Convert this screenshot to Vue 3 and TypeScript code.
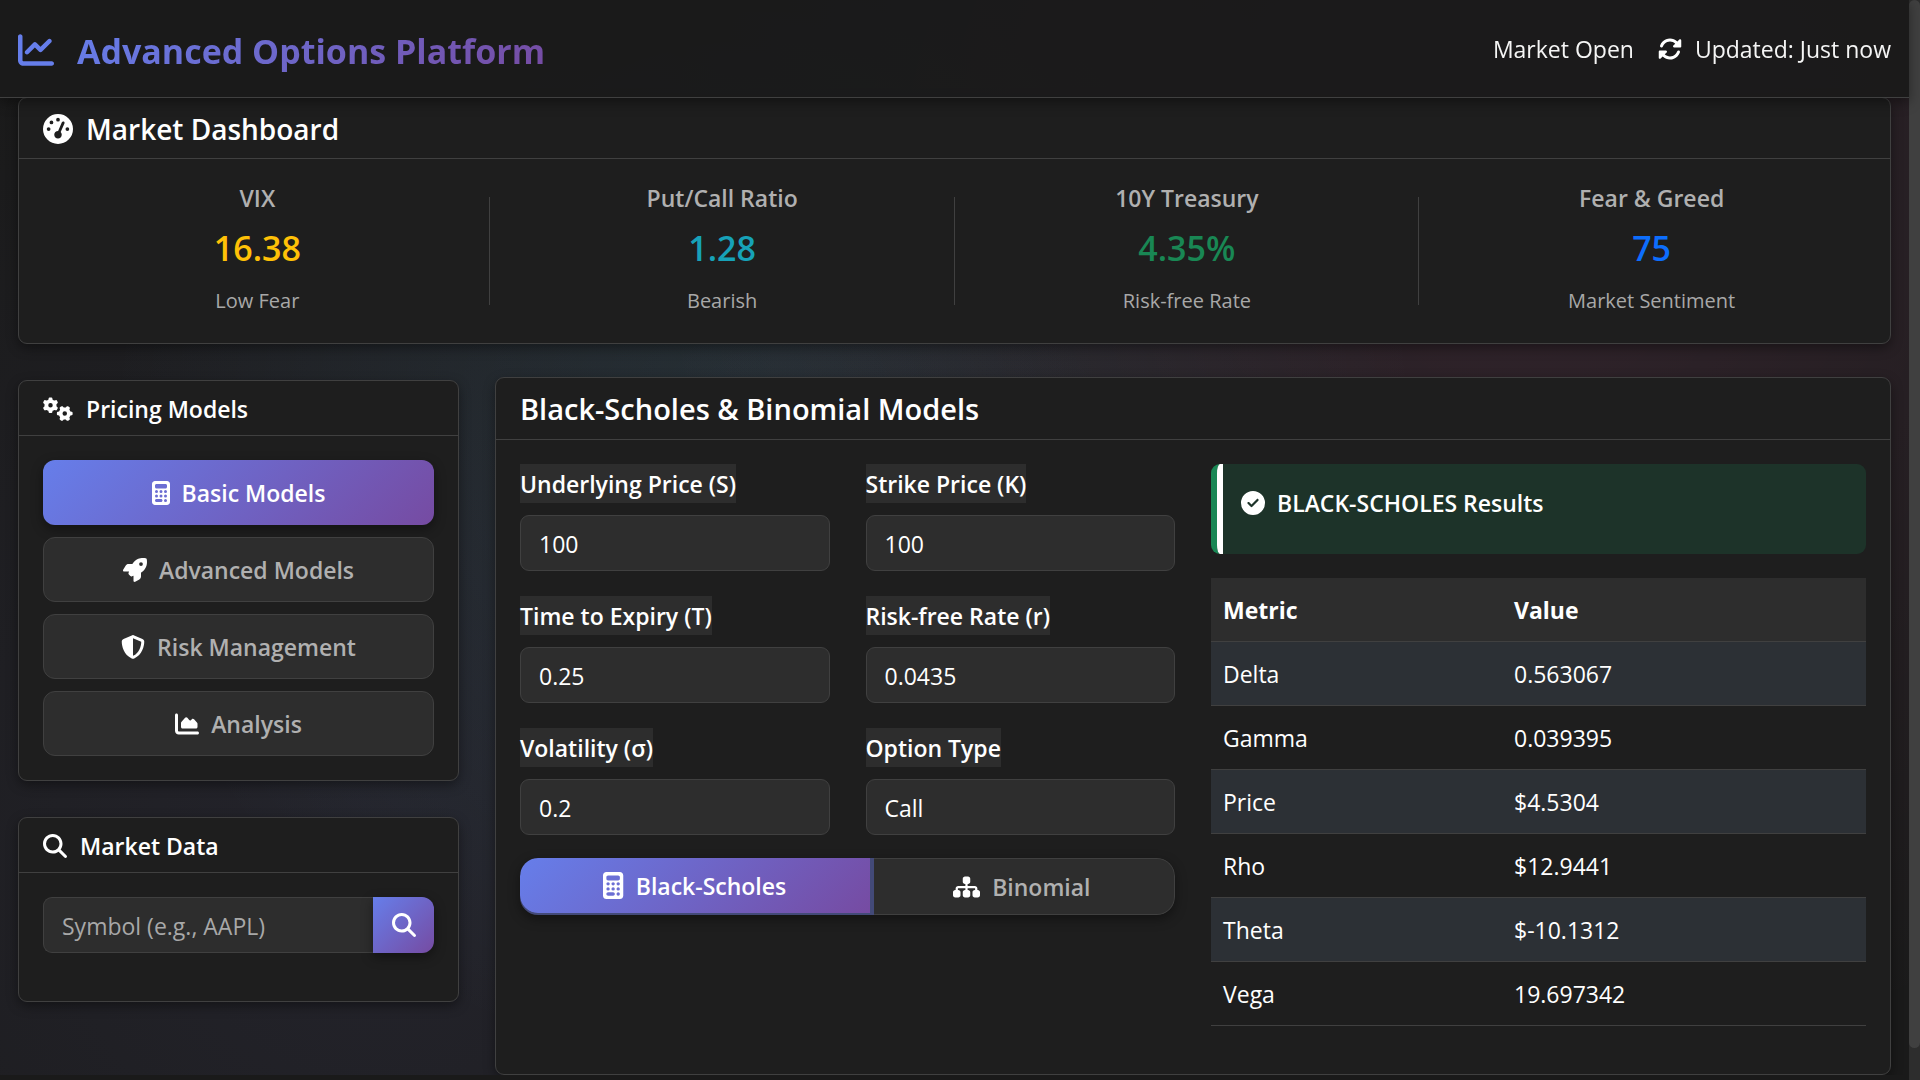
<script setup lang="ts">
import { ref } from 'vue'

interface Icon {
  box: string
  path: string
}

const icons: Record<string, Icon> = {
  chartLine: {
    box: '0 0 512 512',
    path: 'M64 64c0-17.7-14.3-32-32-32S0 46.3 0 64V400c0 44.2 35.8 80 80 80H480c17.7 0 32-14.3 32-32s-14.3-32-32-32H80c-8.8 0-16-7.2-16-16V64zm406.6 86.6c12.5-12.5 12.5-32.8 0-45.3s-32.8-12.5-45.3 0L320 210.7l-57.4-57.4c-12.5-12.5-32.8-12.5-45.3 0l-112 112c-12.5 12.5-12.5 32.8 0 45.3s32.8 12.5 45.3 0L240 221.3l57.4 57.4c12.5 12.5 32.8 12.5 45.3 0l128-128z',
  },
  gauge: {
    box: '0 0 512 512',
    path: 'M0 256a256 256 0 1 1 512 0A256 256 0 1 1 0 256zM288 96a32 32 0 1 0 -64 0 32 32 0 1 0 64 0zM256 416c35.3 0 64-28.7 64-64c0-17.4-6.9-33.1-18.1-44.6L366 161.7c5.3-12.1-.2-26.3-12.3-31.6s-26.3 .2-31.6 12.3L257.9 288c-.6 0-1.3 0-1.9 0c-35.3 0-64 28.7-64 64s28.7 64 64 64zM176 144a32 32 0 1 0 -64 0 32 32 0 1 0 64 0zM96 288a32 32 0 1 0 0-64 32 32 0 1 0 0 64zm352-32a32 32 0 1 0 -64 0 32 32 0 1 0 64 0z',
  },
  rotate: {
    box: '0 0 512 512',
    path: 'M142.9 142.9c62.2-62.2 162.7-62.5 225.3-1L327 183c-6.9 6.9-8.9 17.2-5.2 26.2s12.5 14.8 22.2 14.8H463.5c0 0 0 0 0 0H472c13.3 0 24-10.7 24-24V72c0-9.7-5.8-18.5-14.8-22.2s-19.3-1.7-26.2 5.2L413.4 96.6c-87.6-86.5-228.7-86.2-315.8 1C73.2 122 55.6 150.7 44.8 181.4c-5.9 16.7 2.9 34.9 19.5 40.8s34.9-2.9 40.8-19.5c7.7-21.8 20.2-42.3 37.8-59.8zM16 312v7.6 .7V440c0 9.7 5.8 18.5 14.8 22.2s19.3 1.7 26.2-5.2l41.6-41.6c87.6 86.5 228.7 86.2 315.8-1c24.4-24.4 42.1-53.1 52.9-83.7c5.9-16.7-2.9-34.9-19.5-40.8s-34.9 2.9-40.8 19.5c-7.7 21.8-20.2 42.3-37.8 59.8c-62.2 62.2-162.7 62.5-225.3 1L185 329c6.9-6.9 8.9-17.2 5.2-26.2s-12.5-14.8-22.2-14.8H48.4h-.7H40c-13.3 0-24 10.7-24 24z',
  },
  calculator: {
    box: '0 0 384 512',
    path: 'M64 0C28.7 0 0 28.7 0 64V448c0 35.3 28.7 64 64 64H320c35.3 0 64-28.7 64-64V64c0-35.3-28.7-64-64-64H64zM96 64H288c17.7 0 32 14.3 32 32v32c0 17.7-14.3 32-32 32H96c-17.7 0-32-14.3-32-32V96c0-17.7 14.3-32 32-32zm32 160a32 32 0 1 1 -64 0 32 32 0 1 1 64 0zM96 352a32 32 0 1 1 0-64 32 32 0 1 1 0 64zM64 416c0-17.7 14.3-32 32-32h96c17.7 0 32 14.3 32 32s-14.3 32-32 32H96c-17.7 0-32-14.3-32-32zM192 256a32 32 0 1 1 0-64 32 32 0 1 1 0 64zm32 64a32 32 0 1 1 -64 0 32 32 0 1 1 64 0zm64-64a32 32 0 1 1 0-64 32 32 0 1 1 0 64zm32 64a32 32 0 1 1 -64 0 32 32 0 1 1 64 0zM288 448a32 32 0 1 1 0-64 32 32 0 1 1 0 64z',
  },
  rocket: {
    box: '0 0 512 512',
    path: 'M156.6 384.9L125.7 354c-8.5-8.5-11.5-20.8-7.7-32.2c3-8.9 7-20.5 11.8-33.8L24 288c-8.6 0-16.6-4.6-20.9-12.1s-4.2-16.7 .2-24.1l52.5-88.5c13-21.9 36.5-35.3 61.9-35.3l82.3 0c2.4-4 4.8-7.7 7.2-11.3C289.1-4.1 411.1-8.1 483.9 5.3c11.6 2.1 20.6 11.2 22.8 22.8c13.4 72.9 9.3 194.8-111.4 276.7c-3.5 2.4-7.3 4.8-11.3 7.2v82.3c0 25.4-13.4 49-35.3 61.9l-88.5 52.5c-7.4 4.4-16.6 4.5-24.1 .2s-12.1-12.2-12.1-20.9V380.8c-14.1 4.9-26.4 8.9-35.7 11.9c-11.2 3.6-23.4 .5-31.8-7.8zM384 168a40 40 0 1 0 0-80 40 40 0 1 0 0 80z',
  },
  shield: {
    box: '0 0 512 512',
    path: 'M256 0c4.6 0 9.2 1 13.4 2.9L457.7 82.8c22 9.3 38.4 31 38.3 57.2c-.5 99.2-41.3 280.7-213.6 363.2c-16.7 8-36.1 8-52.8 0C57.3 420.7 16.5 239.2 16 140c-.1-26.2 16.3-47.9 38.3-57.2L242.7 2.9C246.8 1 251.4 0 256 0zm0 66.8V444.8C394 378 431.1 230.1 432 141.4L256 66.8l0 0z',
  },
  chartArea: {
    box: '0 0 512 512',
    path: 'M64 64c0-17.7-14.3-32-32-32S0 46.3 0 64V400c0 44.2 35.8 80 80 80H480c17.7 0 32-14.3 32-32s-14.3-32-32-32H80c-8.8 0-16-7.2-16-16V64zm96 288H448c17.7 0 32-14.3 32-32V251.8c0-7.6-2.7-15-7.7-20.8l-65.8-76.8c-12.1-14.2-33.7-15-46.9-1.8l-21 21c-10 10-26.4 9.2-35.4-1.6l-39.2-47c-12.6-15.1-35.7-15.4-48.7-.6L135.9 215c-5.1 5.8-7.9 13.3-7.9 21.1v84c0 17.7 14.3 32 32 32z',
  },
  search: {
    box: '0 0 512 512',
    path: 'M416 208c0 45.9-14.9 88.3-40 122.7L502.6 457.4c12.5 12.5 12.5 32.8 0 45.3s-32.8 12.5-45.3 0L330.7 376c-34.4 25.2-76.8 40-122.7 40C93.1 416 0 322.9 0 208S93.1 0 208 0S416 93.1 416 208zM208 352a144 144 0 1 0 0-288 144 144 0 1 0 0 288z',
  },
  check: {
    box: '0 0 512 512',
    path: 'M256 512A256 256 0 1 0 256 0a256 256 0 1 0 0 512zM369 209L241 337c-9.4 9.4-24.6 9.4-33.9 0l-64-64c-9.4-9.4-9.4-24.6 0-33.9s24.6-9.4 33.9 0l47 47L335 175c9.4-9.4 24.6-9.4 33.9 0s9.4 24.6 0 33.9z',
  },
  sitemap: {
    box: '0 0 576 512',
    path: 'M208 80c0-26.5 21.5-48 48-48h64c26.5 0 48 21.5 48 48v64c0 26.5-21.5 48-48 48h-8v40H464c30.9 0 56 25.1 56 56v32h8c26.5 0 48 21.5 48 48v64c0 26.5-21.5 48-48 48H464c-26.5 0-48-21.5-48-48V368c0-26.5 21.5-48 48-48h8V288c0-4.4-3.6-8-8-8H312v40h8c26.5 0 48 21.5 48 48v64c0 26.5-21.5 48-48 48H256c-26.5 0-48-21.5-48-48V368c0-26.5 21.5-48 48-48h8V280H112c-4.4 0-8 3.6-8 8v32h8c26.5 0 48 21.5 48 48v64c0 26.5-21.5 48-48 48H48c-26.5 0-48-21.5-48-48V368c0-26.5 21.5-48 48-48h8V288c0-30.9 25.1-56 56-56H264V192h-8c-26.5 0-48-21.5-48-48V80z',
  },
  gears: {
    box: '0 0 640 512',
    path: 'M308.5 135.3c7.1-6.3 9.9-16.2 6.2-25c-2.3-5.3-4.8-10.5-7.6-15.5L304 89.4c-3-5-6.3-9.9-9.8-14.6c-5.7-7.6-15.7-10.1-24.7-7.1l-28.2 9.3c-10.7-8.8-23-16-36.2-20.9L199 27.1c-1.9-9.3-9.1-16.7-18.5-17.8C173.9 8.4 167.2 8 160.4 8h-.7c-6.8 0-13.5 .4-20.1 1.2c-9.4 1.1-16.6 8.6-18.5 17.8L115 56.1c-13.3 5-25.5 12.1-36.2 20.9L50.5 67.8c-9-3-19-.5-24.7 7.1c-3.5 4.7-6.8 9.6-9.9 14.6l-3 5.3c-2.8 5-5.3 10.2-7.6 15.6c-3.7 8.7-.9 18.6 6.2 25l22.2 19.8C32.6 161.9 32 168.9 32 176s.6 14.1 1.7 20.9L11.5 216.7c-7.1 6.3-9.9 16.2-6.2 25c2.3 5.3 4.8 10.5 7.6 15.6l3 5.2c3 5.1 6.3 9.9 9.9 14.6c5.7 7.6 15.7 10.1 24.7 7.1l28.2-9.3c10.7 8.8 23 16 36.2 20.9l6.1 29.1c1.9 9.3 9.1 16.7 18.5 17.8c6.7 .8 13.5 1.2 20.4 1.2s13.7-.4 20.4-1.2c9.4-1.1 16.6-8.6 18.5-17.8l6.1-29.1c13.3-5 25.5-12.1 36.2-20.9l28.2 9.3c9 3 19 .5 24.7-7.1c3.5-4.7 6.8-9.5 9.8-14.6l3.1-5.4c2.8-5 5.3-10.2 7.6-15.5c3.7-8.7 .9-18.6-6.2-25l-22.2-19.8c1.1-6.8 1.7-13.8 1.7-20.9s-.6-14.1-1.7-20.9l22.2-19.8zM112 176a48 48 0 1 1 96 0 48 48 0 1 1 -96 0zM504.7 500.5c6.3 7.1 16.2 9.9 25 6.2c5.3-2.3 10.5-4.8 15.5-7.6l5.4-3.1c5-3 9.9-6.3 14.6-9.8c7.6-5.7 10.1-15.7 7.1-24.7l-9.3-28.2c8.8-10.7 16-23 20.9-36.2l29.1-6.1c9.3-1.9 16.7-9.1 17.8-18.5c.8-6.7 1.2-13.5 1.2-20.4s-.4-13.7-1.2-20.4c-1.1-9.4-8.6-16.6-17.8-18.5L583.9 307c-5-13.3-12.1-25.5-20.9-36.2l9.3-28.2c3-9 .5-19-7.1-24.7c-4.7-3.5-9.6-6.8-14.6-9.9l-5.3-3c-5-2.8-10.2-5.3-15.6-7.6c-8.7-3.7-18.6-.9-25 6.2l-19.8 22.2c-6.8-1.1-13.8-1.7-20.9-1.7s-14.1 .6-20.9 1.7l-19.8-22.2c-6.3-7.1-16.2-9.9-25-6.2c-5.3 2.3-10.5 4.8-15.6 7.6l-5.2 3c-5.1 3-9.9 6.3-14.6 9.9c-7.6 5.7-10.1 15.7-7.1 24.7l9.3 28.2c-8.8 10.7-16 23-20.9 36.2L315.1 313c-9.3 1.9-16.7 9.1-17.8 18.5c-.8 6.7-1.2 13.5-1.2 20.4s.4 13.7 1.2 20.4c1.1 9.4 8.6 16.6 17.8 18.5l29.1 6.1c5 13.3 12.1 25.5 20.9 36.2l-9.3 28.2c-3 9-.5 19 7.1 24.7c4.7 3.5 9.5 6.8 14.6 9.8l5.4 3.1c5 2.8 10.2 5.3 15.5 7.6c8.7 3.7 18.6 .9 25-6.2l19.8-22.2c6.8 1.1 13.8 1.7 20.9 1.7s14.1-.6 20.9-1.7l19.8 22.2zM464 304a48 48 0 1 1 0 96 48 48 0 1 1 0-96z',
  },
}

const metrics = [
  { label: 'VIX', value: '16.38', note: 'Low Fear', tone: 'warning' },
  { label: 'Put/Call Ratio', value: '1.28', note: 'Bearish', tone: 'info' },
  { label: '10Y Treasury', value: '4.35%', note: 'Risk-free Rate', tone: 'success' },
  { label: 'Fear & Greed', value: '75', note: 'Market Sentiment', tone: 'primary' },
]

const models = [
  { id: 'basic', label: 'Basic Models', icon: icons.calculator },
  { id: 'advanced', label: 'Advanced Models', icon: icons.rocket },
  { id: 'risk', label: 'Risk Management', icon: icons.shield },
  { id: 'analysis', label: 'Analysis', icon: icons.chartArea },
]
const activeModel = ref('basic')

const fields = ref([
  { id: 'spot', label: 'Underlying Price (S)', value: '100' },
  { id: 'strike', label: 'Strike Price (K)', value: '100' },
  { id: 'expiry', label: 'Time to Expiry (T)', value: '0.25' },
  { id: 'rate', label: 'Risk-free Rate (r)', value: '0.0435' },
  { id: 'vol', label: 'Volatility (σ)', value: '0.2' },
])
const optionType = ref('call')
const symbol = ref('')

const results = [
  { metric: 'Delta', value: '0.563067' },
  { metric: 'Gamma', value: '0.039395' },
  { metric: 'Price', value: '$4.5304' },
  { metric: 'Rho', value: '$12.9441' },
  { metric: 'Theta', value: '$-10.1312' },
  { metric: 'Vega', value: '19.697342' },
]
</script>

<template>
  <div class="page">
    <header class="topbar">
      <div class="brand">
        <svg class="brand-icon" :viewBox="icons.chartLine.box" aria-hidden="true"><path :d="icons.chartLine.path" /></svg>
        <h1>Advanced Options Platform</h1>
      </div>
      <div class="status">
        <span>Market Open</span>
        <span class="updated">
          <svg class="icon" :viewBox="icons.rotate.box" aria-hidden="true"><path :d="icons.rotate.path" /></svg>
          Updated: Just now
        </span>
      </div>
    </header>

    <main class="content">
      <section class="card dashboard">
        <h2 class="card-head large">
          <svg class="icon big" :viewBox="icons.gauge.box" aria-hidden="true"><path :d="icons.gauge.path" /></svg>
          Market Dashboard
        </h2>
        <div class="metrics">
          <div v-for="m in metrics" :key="m.label" class="metric">
            <h3>{{ m.label }}</h3>
            <p class="value" :class="m.tone">{{ m.value }}</p>
            <p class="note">{{ m.note }}</p>
          </div>
        </div>
      </section>

      <div class="columns">
        <aside class="sidebar">
          <section class="card">
            <h2 class="card-head">
              <svg class="icon" :viewBox="icons.gears.box" aria-hidden="true"><path :d="icons.gears.path" /></svg>
              Pricing Models
            </h2>
            <nav class="card-body model-nav">
              <button
                v-for="m in models"
                :key="m.id"
                type="button"
                class="model"
                :class="{ active: m.id === activeModel }"
                @click="activeModel = m.id"
              >
                <svg class="icon" :viewBox="m.icon.box" aria-hidden="true"><path :d="m.icon.path" /></svg>
                {{ m.label }}
              </button>
            </nav>
          </section>

          <section class="card">
            <h2 class="card-head">
              <svg class="icon" :viewBox="icons.search.box" aria-hidden="true"><path :d="icons.search.path" /></svg>
              Market Data
            </h2>
            <form class="card-body" @submit.prevent>
              <div class="lookup">
                <input v-model="symbol" class="control" type="text" placeholder="Symbol (e.g., AAPL)" aria-label="Symbol" />
                <button type="submit" class="lookup-button" aria-label="Search">
                  <svg class="icon" :viewBox="icons.search.box" aria-hidden="true"><path :d="icons.search.path" /></svg>
                </button>
              </div>
            </form>
          </section>
        </aside>

        <section class="card workspace">
          <h2 class="card-head large">Black-Scholes &amp; Binomial Models</h2>
          <div class="card-body split">
            <form class="pricing" @submit.prevent>
              <div class="fields">
                <div v-for="f in fields" :key="f.id" class="field">
                  <label :for="f.id">{{ f.label }}</label>
                  <input :id="f.id" v-model="f.value" class="control" type="text" />
                </div>
                <div class="field">
                  <label for="option-type">Option Type</label>
                  <select id="option-type" v-model="optionType" class="control">
                    <option value="call">Call</option>
                    <option value="put">Put</option>
                  </select>
                </div>
              </div>
              <div class="methods">
                <button type="button" class="method chosen">
                  <svg class="icon" :viewBox="icons.calculator.box" aria-hidden="true"><path :d="icons.calculator.path" /></svg>
                  Black-Scholes
                </button>
                <button type="button" class="method">
                  <svg class="icon" :viewBox="icons.sitemap.box" aria-hidden="true"><path :d="icons.sitemap.path" /></svg>
                  Binomial
                </button>
              </div>
            </form>

            <div class="results">
              <div class="notice">
                <svg class="icon" :viewBox="icons.check.box" aria-hidden="true"><path :d="icons.check.path" /></svg>
                <h3>BLACK-SCHOLES Results</h3>
              </div>
              <table>
                <thead>
                  <tr>
                    <th scope="col">Metric</th>
                    <th scope="col">Value</th>
                  </tr>
                </thead>
                <tbody>
                  <tr v-for="r in results" :key="r.metric">
                    <td>{{ r.metric }}</td>
                    <td>{{ r.value }}</td>
                  </tr>
                </tbody>
              </table>
            </div>
          </div>
        </section>
      </div>
    </main>
  </div>
  <div class="scroll-track" aria-hidden="true"><div class="scroll-thumb"></div></div>
</template>

<style>
html {
  scrollbar-width: none;
}
body {
  background: #1a1a1a;
}
</style>

<style scoped>
.page {
  --card: #1e1e1e;
  --raised: #2d2d2d;
  --line: #404040;
  --muted: #b0b0b0;
  --accent: linear-gradient(135deg, #667eea 0%, #764ba2 100%);
  --body-size: 23px;
  margin-right: 11px;
  color: #fff;
  font-family: "Segoe UI", "Open Sans", "Noto Sans", sans-serif;
  font-size: var(--body-size);
  line-height: 36px;
  background:
    radial-gradient(circle at 20% 80%, rgba(120, 119, 198, 0.1) 0%, transparent 50%),
    radial-gradient(circle at 80% 20%, rgba(255, 119, 198, 0.1) 0%, transparent 50%),
    radial-gradient(circle at 40% 40%, rgba(120, 219, 255, 0.1) 0%, transparent 50%),
    #1a1a1a;
}

h1,
h2,
h3,
p {
  margin: 0;
  font-weight: 600;
}

button,
input,
select {
  box-sizing: border-box;
  margin: 0;
  font: inherit;
  color: inherit;
}

button {
  cursor: pointer;
}

.icon {
  flex: none;
  height: 24px;
  fill: #fff;
}

.icon.big {
  height: 30px;
}

.topbar {
  position: relative;
  z-index: 1;
  display: flex;
  align-items: center;
  justify-content: space-between;
  height: 97px;
  padding: 0 18px;
  background: rgba(26, 26, 26, 0.95);
  border-bottom: 1px solid var(--line);
  box-shadow: 0 4px 12px rgba(0, 0, 0, 0.4);
}

.brand {
  display: flex;
  align-items: center;
  gap: 23px;
  padding-top: 3px;
}

.brand-icon {
  width: 36px;
  height: 36px;
  fill: #667eea;
}

.brand h1 {
  padding-top: 2px;
  font-size: 34px;
  line-height: 48px;
  font-weight: 700;
  color: transparent;
  background: var(--accent);
  background-clip: text;
  -webkit-background-clip: text;
}

.status,
.updated {
  display: flex;
  align-items: center;
}

.status {
  gap: 24px;
  color: #f5f5f5;
}

.updated {
  gap: 13px;
}

.content {
  padding: 0 18px;
}

.card {
  background: var(--card);
  border: 1px solid var(--line);
  border-radius: 9px;
  box-shadow: 0 4px 12px rgba(0, 0, 0, 0.4);
}

.card-head {
  display: flex;
  align-items: center;
  gap: 13px;
  padding: 10px 24px 8px;
  font-size: var(--body-size);
  border-bottom: 1px solid var(--line);
}

.card-head.large {
  padding: 13px 24px 12px;
  font-size: 29px;
}

.card-body {
  padding: 24px;
}

.dashboard {
  margin-top: -1px;
}

.dashboard .card-head {
  padding-bottom: 11px;
  font-size: 28px;
}

.metrics {
  display: grid;
  grid-template-columns: repeat(4, 1fr);
  padding: 15px 6px 18px;
}

.metric {
  position: relative;
  display: flex;
  flex-direction: column;
  align-items: center;
  gap: 8px;
  padding: 6px 12px;
}

.metric:not(:last-child)::after {
  content: "";
  position: absolute;
  right: 0;
  top: 23px;
  bottom: 20px;
  width: 1px;
  background: var(--line);
}

.metric h3 {
  font-size: var(--body-size);
  color: var(--muted);
}

.value {
  font-size: 34px;
  line-height: 48px;
}

.warning {
  color: #ffc107;
}

.info {
  color: #17a2b8;
}

.success {
  color: #198754;
}

.primary {
  color: #0d6efd;
}

.note {
  padding-top: 3px;
  font-size: 20px;
  font-weight: 400;
  color: #a8a8a8;
}

.columns {
  display: grid;
  grid-template-columns: 441px 1fr;
  gap: 36px;
  padding-top: 33px;
}

.sidebar {
  display: flex;
  flex-direction: column;
  gap: 36px;
  padding-top: 3px;
}

.model-nav {
  display: flex;
  flex-direction: column;
  gap: 12px;
}

.model {
  display: flex;
  align-items: center;
  justify-content: center;
  gap: 12px;
  height: 65px;
  font-weight: 600;
  color: var(--muted);
  background: var(--raised);
  border: 1px solid var(--line);
  border-radius: 12px;
}

.model.active {
  color: #fff;
  background: var(--accent);
  border: 0;
  box-shadow: 0 4px 12px rgba(0, 0, 0, 0.4);
}

.control {
  width: 100%;
  min-width: 0;
  height: 56px;
  padding: 1px 18px 0;
  color: #fff;
  background: var(--raised);
  border: 1px solid var(--line);
  border-radius: 9px;
  appearance: none;
}

.control::placeholder {
  color: #a8a8a8;
  opacity: 1;
}

.lookup {
  display: flex;
  margin-bottom: 24px;
}

.lookup .control {
  border-right: 0;
  border-radius: 9px 0 0 9px;
}

.lookup-button {
  display: grid;
  flex: none;
  place-items: center;
  width: 61px;
  padding: 0;
  background: var(--accent);
  border: 0;
  border-radius: 0 12px 12px 0;
  box-shadow: 0 4px 12px rgba(0, 0, 0, 0.4);
}

.split {
  display: grid;
  grid-template-columns: 1fr 1fr;
  gap: 36px;
}

.fields {
  display: grid;
  grid-template-columns: 1fr 1fr;
  gap: 25px 36px;
}

.field {
  display: flex;
  flex-direction: column;
  align-items: flex-start;
  gap: 12px;
}

.field label {
  padding-top: 2px;
  font-weight: 600;
  line-height: 37px;
  background: var(--raised);
}

.methods {
  display: flex;
  margin-top: 23px;
  overflow: hidden;
  border-radius: 18px;
  box-shadow: 0 4px 12px rgba(0, 0, 0, 0.4);
}

.method {
  display: flex;
  flex: 1 1 auto;
  align-items: center;
  justify-content: center;
  gap: 12px;
  height: 57px;
  padding: 0;
  color: var(--muted);
  font-weight: 600;
  background: var(--raised);
  border: 1px solid var(--line);
  border-left: 0;
  border-radius: 0 18px 18px 0;
}

.method.chosen {
  z-index: 1;
  height: 55px;
  color: #fff;
  background: var(--accent);
  border: 0;
  border-radius: 18px 0 0 18px;
  box-shadow: 0 0 0 4px #434a78;
}

.method.chosen .icon {
  height: 27px;
}

.notice {
  position: relative;
  display: flex;
  align-items: flex-start;
  gap: 12px;
  padding: 21px 24px 33px;
  overflow: hidden;
  background: rgba(25, 135, 84, 0.2);
  border-left: 6px solid #198754;
  border-radius: 9px;
}

.notice::before {
  content: "";
  position: absolute;
  inset: 0 auto 0 0;
  width: 6px;
  background: #fff;
}

.notice .icon {
  margin-top: 6px;
}

.notice h3 {
  font-size: var(--body-size);
}

table {
  width: 100%;
  margin: 24px 0;
  table-layout: fixed;
  border-spacing: 0;
  text-align: left;
}

th,
td {
  height: 63px;
  padding: 0 12px;
  border-bottom: 1px solid var(--line);
}

th {
  font-weight: 700;
  background: var(--raised);
}

th:first-child {
  width: 267px;
}

tbody tr:nth-child(odd) td {
  background: #2c3035;
}

.scroll-track {
  position: fixed;
  inset: 0 0 0 auto;
  width: 11px;
  background: #2d2d2d;
}

.scroll-thumb {
  height: 97%;
  background: #404040;
  border-radius: 6px;
}
</style>
